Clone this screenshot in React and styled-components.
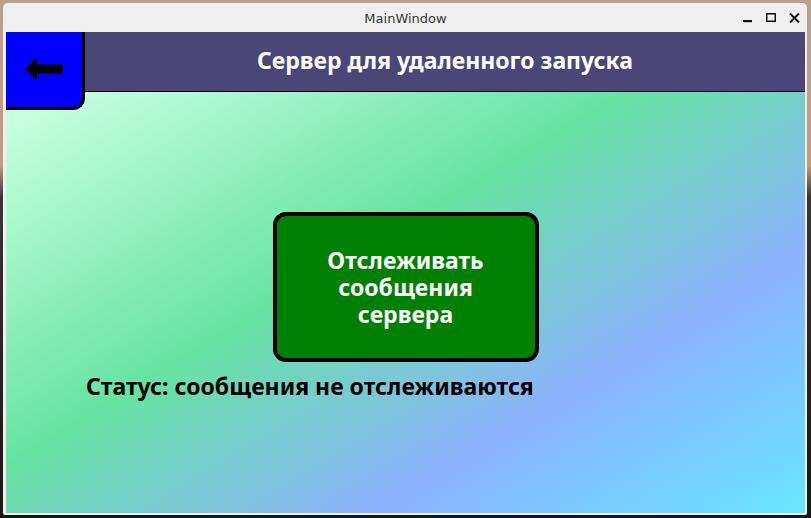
import styled, { createGlobalStyle } from "styled-components";

const GlobalStyle = createGlobalStyle`
  html, body {
    margin: 0;
    padding: 0;
    width: 811px;
    height: 518px;
    overflow: hidden;
  }
  body {
    background: linear-gradient(180deg, #b8a08e 0%, #c39a7b 32%, #3b3538 38%, #2a2326 70%, #1c1614 100%);
    font-family: "Noto Sans", "Open Sans", sans-serif;
  }
`;

const Desktop = styled.div`
  padding: 3px 0 0 3px;
`;

const Window = styled.div`
  width: 804px;
  height: 512px;
  background: #efefef;
  border-radius: 5px 5px 2px 2px;
  padding: 0 2px 2px 3px;
  box-sizing: border-box;
  display: flex;
  flex-direction: column;
`;

const TitleBar = styled.div`
  height: 29px;
  flex-shrink: 0;
  position: relative;
  display: flex;
  align-items: center;
  justify-content: center;
  font-family: "DejaVu Sans", "Noto Sans", sans-serif;
  font-size: 13px;
  color: #3a3a3a;
  padding-top: 1px;
  box-sizing: border-box;
`;

const Controls = styled.div`
  position: absolute;
  right: 5px;
  top: 10px;
  display: flex;
  align-items: center;
  gap: 13px;
`;

const Content = styled.div`
  flex: 1;
  display: flex;
  flex-direction: column;
  background: linear-gradient(
    to bottom right,
    #d2ffe8 0%,
    #c6ffdf 10%,
    #66e3a3 45%,
    #8cb2ff 73%,
    #66e6ff 100%
  );
`;

const Header = styled.div`
  display: flex;
  align-items: flex-start;
  height: 60px;
  flex-shrink: 0;
`;

const BackButton = styled.button`
  width: 79px;
  height: 78px;
  flex-shrink: 0;
  background: #0000ff;
  border: none;
  border-right: 3px solid #000;
  border-bottom: 3px solid #000;
  border-bottom-right-radius: 12px;
  box-sizing: border-box;
  padding: 0 0 2px 0;
  display: flex;
  align-items: center;
  justify-content: center;
  position: relative;
  z-index: 1;
  cursor: pointer;
`;

const HeaderBar = styled.div`
  flex: 1;
  height: 60px;
  box-sizing: border-box;
  background: #4a4778;
  border-bottom: 1px solid #000;
  display: flex;
  align-items: center;
  justify-content: center;
  color: #fff;
  font-weight: 700;
  font-size: 23px;
  padding-bottom: 3px;
`;

const Main = styled.div`
  flex: 1;
  display: flex;
  flex-direction: column;
  align-items: center;
`;

const WatchButton = styled.button`
  margin-top: 120px;
  width: 266px;
  height: 150px;
  background: #008000;
  border: 4px solid #000;
  border-radius: 13px;
  box-sizing: border-box;
  color: #fff;
  font-family: "Noto Sans", "Open Sans", sans-serif;
  font-weight: 700;
  font-size: 23px;
  line-height: 27px;
  padding: 0;
  cursor: pointer;
`;

const Status = styled.div`
  align-self: flex-start;
  margin: 8px 0 0 80px;
  font-weight: 700;
  font-size: 23px;
  color: #000;
`;

function BackArrow() {
  return (
    <svg width="38" height="24" viewBox="0 0 38 24">
      <path d="M0 12 L12 0 L12 7.5 L38 7.5 L38 16.5 L12 16.5 L12 24 Z" fill="#000" />
    </svg>
  );
}

function WindowControls() {
  return (
    <Controls>
      <svg width="10" height="10" viewBox="0 0 10 10">
        <rect x="0" y="7" width="9" height="2.2" fill="#111" />
      </svg>
      <svg width="10" height="10" viewBox="0 0 10 10">
        <rect x="0.75" y="0.75" width="8.5" height="7.5" fill="none" stroke="#111" strokeWidth="1.5" />
      </svg>
      <svg width="11" height="10" viewBox="0 0 11 10">
        <path d="M1 0.5 L10 9.5 M10 0.5 L1 9.5" stroke="#111" strokeWidth="2" />
      </svg>
    </Controls>
  );
}

export default function App() {
  return (
    <>
      <GlobalStyle />
      <Desktop>
        <Window>
          <TitleBar>
            MainWindow
            <WindowControls />
          </TitleBar>
          <Content>
            <Header>
              <BackButton>
                <BackArrow />
              </BackButton>
              <HeaderBar>Сервер для удаленного запуска</HeaderBar>
            </Header>
            <Main>
              <WatchButton>
                Отслеживать
                <br />
                сообщения
                <br />
                сервера
              </WatchButton>
              <Status>Статус: сообщения не отслеживаются</Status>
            </Main>
          </Content>
        </Window>
      </Desktop>
    </>
  );
}
